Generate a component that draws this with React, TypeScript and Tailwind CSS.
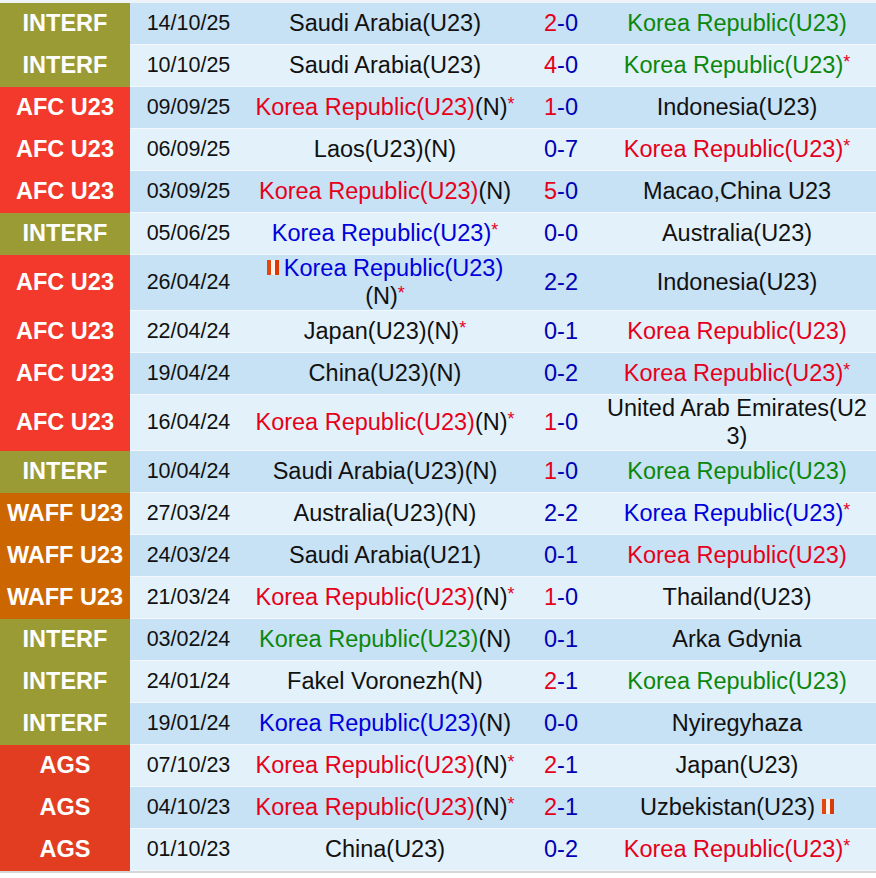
import React from "react";

type League = "INTERF" | "AFC U23" | "WAFF U23" | "AGS";
type Tone = "red" | "green" | "blue" | "black";

interface Team {
  name: string;
  tone: Tone;
  neutral?: boolean;
  star?: boolean;
  card?: "before" | "after";
  breakAll?: boolean;
}

interface Match {
  league: League;
  date: string;
  home: Team;
  hs: number;
  as: number;
  away: Team;
}

const leagueBg: Record<League, string> = {
  INTERF: "bg-[#9b9b35]",
  "AFC U23": "bg-[#f2392b]",
  "WAFF U23": "bg-[#cc6600]",
  AGS: "bg-[#e23d20]",
};

const toneText: Record<Tone, string> = {
  red: "text-[#e6001a]",
  green: "text-[#0b870b]",
  blue: "text-[#0000dc]",
  black: "text-[#111]",
};

const KR = "Korea Republic(U23)";

const matches: Match[] = [
  { league: "INTERF", date: "14/10/25", home: { name: "Saudi Arabia(U23)", tone: "black" }, hs: 2, as: 0, away: { name: KR, tone: "green" } },
  { league: "INTERF", date: "10/10/25", home: { name: "Saudi Arabia(U23)", tone: "black" }, hs: 4, as: 0, away: { name: KR, tone: "green", star: true } },
  { league: "AFC U23", date: "09/09/25", home: { name: KR, tone: "red", neutral: true, star: true }, hs: 1, as: 0, away: { name: "Indonesia(U23)", tone: "black" } },
  { league: "AFC U23", date: "06/09/25", home: { name: "Laos(U23)", tone: "black", neutral: true }, hs: 0, as: 7, away: { name: KR, tone: "red", star: true } },
  { league: "AFC U23", date: "03/09/25", home: { name: KR, tone: "red", neutral: true }, hs: 5, as: 0, away: { name: "Macao,China U23", tone: "black" } },
  { league: "INTERF", date: "05/06/25", home: { name: KR, tone: "blue", star: true }, hs: 0, as: 0, away: { name: "Australia(U23)", tone: "black" } },
  { league: "AFC U23", date: "26/04/24", home: { name: KR, tone: "blue", neutral: true, star: true, card: "before" }, hs: 2, as: 2, away: { name: "Indonesia(U23)", tone: "black" } },
  { league: "AFC U23", date: "22/04/24", home: { name: "Japan(U23)", tone: "black", neutral: true, star: true }, hs: 0, as: 1, away: { name: KR, tone: "red" } },
  { league: "AFC U23", date: "19/04/24", home: { name: "China(U23)", tone: "black", neutral: true }, hs: 0, as: 2, away: { name: KR, tone: "red", star: true } },
  { league: "AFC U23", date: "16/04/24", home: { name: KR, tone: "red", neutral: true, star: true }, hs: 1, as: 0, away: { name: "United Arab Emirates(U23)", tone: "black", breakAll: true } },
  { league: "INTERF", date: "10/04/24", home: { name: "Saudi Arabia(U23)", tone: "black", neutral: true }, hs: 1, as: 0, away: { name: KR, tone: "green" } },
  { league: "WAFF U23", date: "27/03/24", home: { name: "Australia(U23)", tone: "black", neutral: true }, hs: 2, as: 2, away: { name: KR, tone: "blue", star: true } },
  { league: "WAFF U23", date: "24/03/24", home: { name: "Saudi Arabia(U21)", tone: "black" }, hs: 0, as: 1, away: { name: KR, tone: "red" } },
  { league: "WAFF U23", date: "21/03/24", home: { name: KR, tone: "red", neutral: true, star: true }, hs: 1, as: 0, away: { name: "Thailand(U23)", tone: "black" } },
  { league: "INTERF", date: "03/02/24", home: { name: KR, tone: "green", neutral: true }, hs: 0, as: 1, away: { name: "Arka Gdynia", tone: "black" } },
  { league: "INTERF", date: "24/01/24", home: { name: "Fakel Voronezh", tone: "black", neutral: true }, hs: 2, as: 1, away: { name: KR, tone: "green" } },
  { league: "INTERF", date: "19/01/24", home: { name: KR, tone: "blue", neutral: true }, hs: 0, as: 0, away: { name: "Nyiregyhaza", tone: "black" } },
  { league: "AGS", date: "07/10/23", home: { name: KR, tone: "red", neutral: true, star: true }, hs: 2, as: 1, away: { name: "Japan(U23)", tone: "black" } },
  { league: "AGS", date: "04/10/23", home: { name: KR, tone: "red", neutral: true, star: true }, hs: 2, as: 1, away: { name: "Uzbekistan(U23)", tone: "black", card: "after" } },
  { league: "AGS", date: "01/10/23", home: { name: "China(U23)", tone: "black" }, hs: 0, as: 2, away: { name: KR, tone: "red", star: true } },
];

function RedCard({ className = "" }: { className?: string }) {
  // little red-card badge: orange/red body with a white bar down the middle
  return (
    <span
      className={`relative -top-[2px] inline-block w-[12px] h-[15px] align-middle bg-[linear-gradient(to_right,#e3470e_0,#e3470e_4px,#fff4ee_4px,#fff4ee_8px,#d93a08_8px,#d93a08_100%)] ${className}`}
    />
  );
}

function TeamCell({ team }: { team: Team }) {
  return (
    <span className={team.breakAll ? "break-all" : ""}>
      {team.card === "before" && <RedCard className="mr-[5px]" />}
      <span className={toneText[team.tone]}>{team.name}</span>
      {team.neutral && <span className="text-[#111]">(N)</span>}
      {team.star && <span className="relative -top-[5px] text-[#e6001a] text-[18px] leading-none">*</span>}
      {team.card === "after" && <RedCard className="ml-[7px]" />}
    </span>
  );
}

function MatchRow({ m, idx }: { m: Match; idx: number }) {
  const rowBg = idx % 2 === 0 ? "bg-[#c7e1f5]" : "bg-[#e3f1fb]";
  const cell = `flex items-center justify-center text-center border-b border-[#f2f8fd] ${rowBg}`;
  return (
    <div className="grid grid-cols-[130px_116px_278px_74px_278px] min-h-[42px] leading-[27.5px]">
      <div className={`${leagueBg[m.league]} flex items-center justify-center text-white font-bold text-[23.5px]`}>
        {m.league}
      </div>
      <div className={`${cell} text-[21.5px] text-[#111] pl-[1px]`}>{m.date}</div>
      <div className={`${cell} text-[23.5px] px-[3px]`}>
        <TeamCell team={m.home} />
      </div>
      <div className={`${cell} text-[23.5px]`}>
        <span className={m.hs > m.as ? "text-[#e6001a]" : "text-[#0000b4]"}>{m.hs}</span>
        <span className="text-[#0000b4]">-{m.as}</span>
      </div>
      <div className={`${cell} text-[23.5px] px-[4px]`}>
        <TeamCell team={m.away} />
      </div>
    </div>
  );
}

export default function App() {
  return (
    <div
      className="w-[876px] h-[878px] bg-white overflow-hidden"
      style={{ fontFamily: '"Liberation Sans", Arial, sans-serif' }}
    >
      <div className="border-t-[3px] border-[#eef4f9] border-b-2 border-b-[#d6d6d6]">
        {matches.map((m, i) => (
          <MatchRow key={i} m={m} idx={i} />
        ))}
      </div>
    </div>
  );
}
